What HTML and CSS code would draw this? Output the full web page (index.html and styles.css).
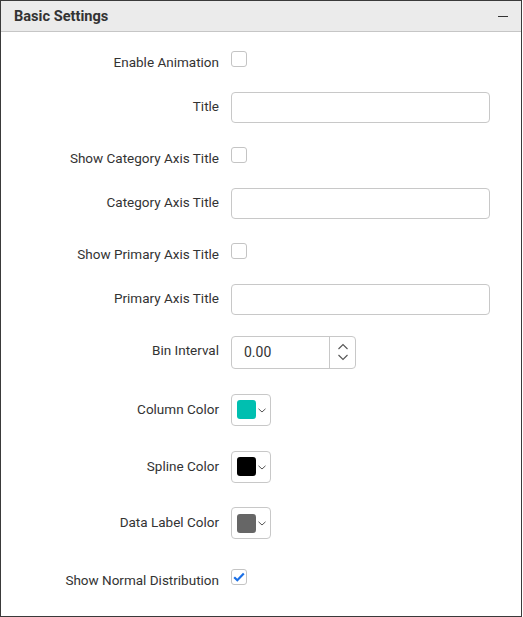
FILE: index.html
```html
<!DOCTYPE html>
<html>
<head>
<meta charset="utf-8">
<link rel="stylesheet" href="styles.css">
</head>
<body>
<div class="panel">
  <div class="panel-header">
    <span class="panel-title">Basic Settings</span>
    <span class="collapse"></span>
  </div>
  <div class="panel-body">
    <div class="row r48 cb-row">
      <label class="lbl">Enable Animation</label>
      <span class="checkbox"></span>
    </div>
    <div class="row r48">
      <label class="lbl">Title</label>
      <div class="text-input"></div>
    </div>
    <div class="row r48 cb-row">
      <label class="lbl">Show Category Axis Title</label>
      <span class="checkbox"></span>
    </div>
    <div class="row r48">
      <label class="lbl">Category Axis Title</label>
      <div class="text-input"></div>
    </div>
    <div class="row r48 cb-row">
      <label class="lbl">Show Primary Axis Title</label>
      <span class="checkbox"></span>
    </div>
    <div class="row r48">
      <label class="lbl">Primary Axis Title</label>
      <div class="text-input"></div>
    </div>
    <div class="row r58">
      <label class="lbl lbl-up">Bin Interval</label>
      <div class="numeric">
        <span class="num-value">0.00</span>
        <span class="spin">
          <svg width="12" height="26" viewBox="0 0 12 26">
            <path d="M1.5 10 L6 5.5 L10.5 10" fill="none" stroke="#555" stroke-width="1.1"/>
            <path d="M1.5 16 L6 20.5 L10.5 16" fill="none" stroke="#555" stroke-width="1.1"/>
          </svg>
        </span>
      </div>
    </div>
    <div class="row r57">
      <label class="lbl">Column Color</label>
      <div class="color-pick">
        <span class="swatch teal"></span>
        <svg class="chev" width="8" height="5" viewBox="0 0 8 5"><path d="M0.5 0.8 L4 4 L7.5 0.8" fill="none" stroke="#555" stroke-width="1"/></svg>
      </div>
    </div>
    <div class="row r57">
      <label class="lbl">Spline Color</label>
      <div class="color-pick">
        <span class="swatch black"></span>
        <svg class="chev" width="8" height="5" viewBox="0 0 8 5"><path d="M0.5 0.8 L4 4 L7.5 0.8" fill="none" stroke="#555" stroke-width="1"/></svg>
      </div>
    </div>
    <div class="row r56">
      <label class="lbl">Data Label Color</label>
      <div class="color-pick">
        <span class="swatch gray"></span>
        <svg class="chev" width="8" height="5" viewBox="0 0 8 5"><path d="M0.5 0.8 L4 4 L7.5 0.8" fill="none" stroke="#555" stroke-width="1"/></svg>
      </div>
    </div>
    <div class="row r52 cb-row">
      <label class="lbl">Show Normal Distribution</label>
      <span class="checkbox checked">
        <svg width="12" height="10" viewBox="0 0 12 10"><path d="M1.2 5.2 L4.3 8.2 L10.8 1.5" fill="none" stroke="#1a6fe6" stroke-width="2.2"/></svg>
      </span>
    </div>
  </div>
</div>
</body>
</html>
```

FILE: styles.css
```css
html, body {
  margin: 0;
  padding: 0;
  background: #fff;
}

body {
  font-family: Roboto, "Liberation Sans", Arial, sans-serif;
  color: #333;
}

.panel {
  width: 520px;
  height: 615px;
  border: 1px solid #3a3a3a;
  display: flex;
  flex-direction: column;
}

.panel-header {
  height: 30px;
  background: #ebebeb;
  border-bottom: 1px solid #c6c6c6;
  display: flex;
  align-items: center;
  justify-content: space-between;
  padding: 0 13px 0 13px;
}

.panel-title {
  font-size: 14.6px;
  font-weight: 700;
  color: #333;
}

.collapse {
  display: block;
  width: 10px;
  height: 1.5px;
  background: #333;
  margin-top: 1px;
}

.panel-body {
  padding-top: 3px;
  display: flex;
  flex-direction: column;
}

.row {
  display: flex;
  align-items: center;
  gap: 12px;
}

.r48 { height: 48px; }
.r58 { height: 58px; }
.r57 { height: 57px; }
.r56 { height: 56px; }
.r52 { height: 52px; }

.lbl {
  width: 218px;
  text-align: right;
  font-size: 13.5px;
  color: #333;
  margin-bottom: 2px;
}

.lbl-up {
  margin-bottom: 4px;
}

.cb-row .lbl {
  margin-top: 5px;
  margin-bottom: 0;
}

.checkbox {
  width: 14px;
  height: 14px;
  border: 1px solid #c4c4c4;
  border-radius: 3px;
  background: #fff;
  display: flex;
  align-items: center;
  justify-content: center;
  box-sizing: content-box;
}

.text-input {
  width: 257px;
  height: 29px;
  border: 1px solid #c8c8c8;
  border-radius: 4px;
  background: #fff;
}

.numeric {
  width: 123px;
  height: 31px;
  border: 1px solid #c8c8c8;
  border-radius: 4px;
  display: flex;
  align-items: center;
}

.num-value {
  flex: 1;
  padding-left: 12px;
  font-size: 14px;
  color: #333;
}

.spin {
  width: 25px;
  height: 31px;
  border-left: 1px solid #c8c8c8;
  display: flex;
  align-items: center;
  justify-content: center;
}

.color-pick {
  height: 30px;
  border: 1px solid #c8c8c8;
  border-radius: 4px;
  display: flex;
  align-items: center;
  padding-left: 5px;
  box-sizing: content-box;
  width: 33px;
}

.swatch {
  width: 19px;
  height: 19px;
  border-radius: 3px;
  display: block;
}

.swatch.teal { background: #00bfb0; }
.swatch.black { background: #000; }
.swatch.gray { background: #666; }

.chev {
  margin-left: 2px;
  margin-top: 1px;
}
```
